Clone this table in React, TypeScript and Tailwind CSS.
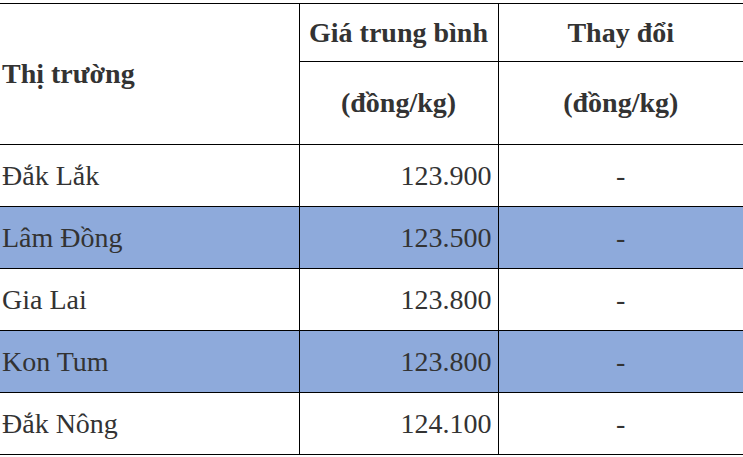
import React from "react"

interface PriceRow {
  market: string
  price: string
  change: string
  highlight: boolean
}

const rows: PriceRow[] = [
  { market: "Đắk Lắk", price: "123.900", change: "-", highlight: false },
  { market: "Lâm Đồng", price: "123.500", change: "-", highlight: true },
  { market: "Gia Lai", price: "123.800", change: "-", highlight: false },
  { market: "Kon Tum", price: "123.800", change: "-", highlight: true },
  { market: "Đắk Nông", price: "124.100", change: "-", highlight: false },
]

export default function App() {
  return (
    <div className="w-[743px] h-[457px] overflow-hidden bg-white pt-[3px] text-[#333333] font-serif">
      <table className="w-[743px] border-collapse table-fixed text-[28px] leading-none font-[Liberation_Serif,serif]">
        <colgroup>
          <col className="w-[299px]" />
          <col className="w-[199px]" />
          <col />
        </colgroup>
        <thead>
          <tr className="h-[58px]">
            <th rowSpan={2} className="border border-black border-l-0 text-left font-bold pl-[2px] align-middle">
              Thị trường
            </th>
            <th className="border border-black text-center font-bold align-middle">Giá trung bình</th>
            <th className="border border-black border-r-0 text-center font-bold align-middle">Thay đổi</th>
          </tr>
          <tr className="h-[83px]">
            <th className="border border-black text-center font-bold align-middle">(đồng/kg)</th>
            <th className="border border-black border-r-0 text-center font-bold align-middle">(đồng/kg)</th>
          </tr>
        </thead>
        <tbody>
          {rows.map((row) => (
            <tr key={row.market} className={row.highlight ? "h-[62px] bg-[#8eaadb]" : "h-[62px] bg-white"}>
              <td className="border border-black border-l-0 pl-[2px] align-middle">{row.market}</td>
              <td className="border border-black pr-[6px] text-right align-middle">{row.price}</td>
              <td className="border border-black border-r-0 text-center align-middle">{row.change}</td>
            </tr>
          ))}
        </tbody>
      </table>
    </div>
  )
}
